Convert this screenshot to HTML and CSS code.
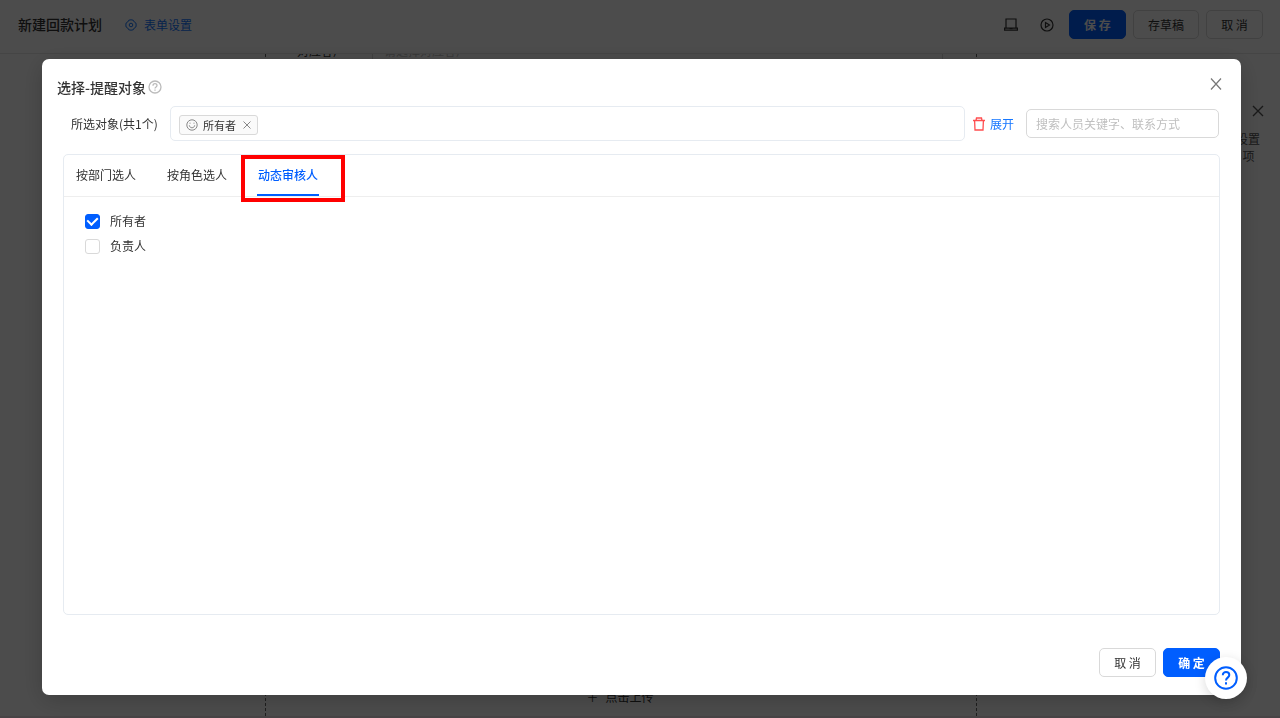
FILE: index.html
```html
<!DOCTYPE html>
<html lang="zh-CN">
<head>
    <meta charset="utf-8">
    <title>新建回款计划</title>
    <link rel="stylesheet" href="styles.css">
</head>
<body>
    <div class="page">
        <header class="header">
            <h1>新建回款计划</h1>
            <a class="form-setting" href="#">
                <svg width="12" height="12" viewBox="0 0 12 12" fill="none" stroke="currentColor"><path d="M3.8 1.2Q6 .4 8.2 1.2L9.3 3l1.6 1q.5 2 0 4L9.3 9l-1.1 1.8q-2.2.8-4.4 0L2.7 9 1.1 8q-.5-2 0-4l1.6-1z"/><circle cx="6" cy="6" r="1.8"/></svg>
                表单设置
            </a>
            <div class="header-actions">
                <div class="header-icons">
                    <button aria-label="预览">
                        <svg width="14" height="14" viewBox="0 0 14 14" fill="none" stroke="currentColor" stroke-width="1.2"><path d="M2 9.5V1h10v8.5M.6 10.2h12.8v2H.6z"/><path d="M5.5 10.6h3"/></svg>
                    </button>
                    <button aria-label="播放">
                        <svg width="14" height="14" viewBox="0 0 14 14" fill="none" stroke="currentColor" stroke-width="1.2"><circle cx="7" cy="7" r="6"/><path d="M5.5 4.5v5l4-2.5z"/></svg>
                    </button>
                </div>
                <button class="btn btn-primary">保 存</button>
                <button class="btn">存草稿</button>
                <button class="btn">取 消</button>
            </div>
        </header>
        <div class="main">
            <div class="canvas">
                <div class="form-row">
                    <label for="customer">对应客户</label>
                    <input type="text" id="customer" placeholder="请选择对应客户">
                </div>
                <button class="upload"><span>＋</span>点击上传</button>
            </div>
            <aside class="settings">
                <button aria-label="关闭设置">
                    <svg width="12" height="12" viewBox="0 0 12 12" fill="none" stroke="currentColor" stroke-width="1.4"><path d="M1 1l10 10M11 1L1 11"/></svg>
                </button>
                <p>设置<br>项&nbsp;&nbsp;</p>
            </aside>
        </div>
    </div>

    <div class="mask">
        <div class="modal" role="dialog" aria-labelledby="modal-title">
            <div class="modal-header">
                <h2 id="modal-title">选择-提醒对象</h2>
                <svg class="tip" width="14" height="14" viewBox="0 0 14 14" fill="none" stroke="currentColor" stroke-width="1.3"><circle cx="7" cy="7" r="6"/><path d="M5 5.7c0-2.7 4-2.6 4-.1C9 7 7 7 7 8.6M7 9.6v1.2"/></svg>
                <button class="modal-close" aria-label="关闭">
                    <svg width="12" height="12" viewBox="0 0 12 12" fill="none" stroke="currentColor" stroke-width="1.2"><path d="M1 .5l10 11M11 .5L1 11.5"/></svg>
                </button>
            </div>

            <div class="selected-row">
                <span class="selected-label">所选对象(共1个)</span>
                <div class="selected-box">
                    <span class="tag">
                        <svg width="12" height="12" viewBox="0 0 12 12" fill="none" stroke="currentColor"><circle cx="6" cy="6" r="5.2"/><path d="M3.3 6.3c.4 3.3 5 3.3 5.4 0M4 3.7v1M8 3.7v1"/></svg>
                        所有者
                        <button aria-label="移除">
                            <svg width="8" height="8" viewBox="0 0 8 8" fill="none" stroke="currentColor"><path d="M.5.5l7 7M7.5.5l-7 7"/></svg>
                        </button>
                    </span>
                </div>
                <button class="clear" aria-label="清空">
                    <svg width="12" height="14" viewBox="0 0 12 14" fill="none" stroke="currentColor" stroke-width="1.3"><path d="M0 3.5h12M3 3.5l.5-2.5h5L9 3.5M1.6 3.5L2 13h8l.4-9.5"/></svg>
                </button>
                <a class="expand" href="#">展开</a>
                <input class="search" type="text" aria-label="搜索" placeholder="搜索人员关键字、联系方式">
            </div>

            <div class="panel">
                <div class="tabs">
                    <button class="tab">按部门选人</button>
                    <button class="tab">按角色选人</button>
                    <button class="tab active">动态审核人<span class="mark"></span></button>
                </div>
                <div class="options">
                    <label><input type="checkbox" checked>所有者</label>
                    <label><input type="checkbox">负责人</label>
                </div>
            </div>

            <div class="modal-footer">
                <button class="btn">取 消</button>
                <button class="btn btn-primary">确 定</button>
            </div>
        </div>
    </div>

    <button class="help" aria-label="帮助">
        <svg width="24" height="24" viewBox="0 0 24 24" fill="none" stroke="currentColor" stroke-width="2"><circle cx="12" cy="12" r="10.8"/><path d="M8.8 9.2c0-4.3 6.5-4.1 6.5-.1 0 2.5-3.3 2.6-3.3 5.4M12 16.2v2.2"/></svg>
    </button>
</body>
</html>
```
FILE: styles.css
```css
* { box-sizing: border-box; }
body {
    margin: 0;
    font-family: "Noto Sans CJK SC", sans-serif;
    font-size: 12px;
    line-height: 18px;
    color: #333;
    overflow: hidden;
}
h1, h2, p { margin: 0; }
h1, h2 {
    font-size: 14px;
    font-weight: 500;
    line-height: 20px;
}
a { text-decoration: none; }
button, input {
    font-family: inherit;
    font-size: 12px;
    color: inherit;
}
button {
    padding: 0;
    border: none;
    background: none;
    cursor: pointer;
}
svg { display: block; }
input::placeholder { color: #bfbfbf; }

.btn {
    height: 29px;
    min-width: 57px;
    padding: 0 14px;
    border: 1px solid #d9d9d9;
    border-radius: 5px;
    background: #fff;
}
.btn-primary {
    background: #005eff;
    border-color: #005eff;
    color: #fff;
    font-weight: 700;
}

/* page behind the dialog */
.page {
    display: flex;
    flex-direction: column;
    height: 100vh;
    background: #fff;
    border-bottom: 2px solid #f0e4ea;
}
.header {
    position: relative;
    z-index: 1;
    display: flex;
    align-items: center;
    height: 54px;
    padding: 0 17px 4px 18px;
    background: #fff;
    border-bottom: 1px solid #e8e8e8;
}
.header h1 { padding-bottom: 2px; }
.form-setting {
    display: flex;
    align-items: center;
    gap: 7px;
    margin-left: 23px;
    color: #1677ff;
}
.header-actions {
    display: flex;
    align-items: center;
    gap: 7px;
    margin-left: auto;
}
.header-icons {
    display: flex;
    gap: 22px;
    margin-right: 8px;
}
.main {
    display: flex;
    flex: 1;
    min-height: 0;
}
.canvas {
    display: flex;
    flex: 1;
    flex-direction: column;
    justify-content: space-between;
    margin-left: 265px;
    padding: 0 33px 10px 31px;
    border: 1px dashed #666;
    border-width: 0 1px;
}
.form-row {
    display: flex;
    align-items: center;
    margin-top: -18px;
}
.form-row label { width: 75px; }
.form-row input {
    flex: 1;
    height: 29px;
    padding: 0 11px;
    border: 1px solid #d9d9d9;
}
.upload {
    align-self: center;
    line-height: 18px;
}
.upload span { margin-right: 7px; }
.settings {
    display: flex;
    flex-direction: column;
    align-items: flex-end;
    gap: 13px;
    width: 303px;
    padding: 51px 16px 0;
    color: #555;
    line-height: 17px;
    text-align: right;
}
.settings p { margin-right: 4px; }

.mask {
    position: fixed;
    inset: 0;
    z-index: 10;
    display: flex;
    padding: 59px 39px 23px 42px;
    background: rgba(0, 0, 0, 0.7);
}
.modal {
    display: flex;
    flex: 1;
    flex-direction: column;
    padding: 18px 21px;
    background: #fff;
    border-radius: 7px;
    box-shadow: 0 5px 24px rgba(0, 0, 0, 0.2);
}
.modal-header {
    display: flex;
    align-items: center;
    margin: 0 -3px 9px -6px;
}
.tip {
    margin-left: 2px;
    color: #bbb;
}
.modal-close {
    margin: 0 1px 6px auto;
    color: #777;
}

.selected-row {
    display: flex;
    align-items: center;
}
.selected-label {
    width: 99px;
    margin-left: 8px;
}
.selected-box {
    display: flex;
    flex: 1;
    align-items: center;
    height: 35px;
    padding: 3px 8px 0;
    border: 1px solid #e6ebf1;
    border-radius: 5px;
}
.tag {
    display: flex;
    align-items: center;
    gap: 5px;
    height: 20px;
    padding: 0 6px;
    border: 1px solid #d9d9d9;
    border-radius: 3px;
    background: #fafafa;
    font-size: 11px;
}
.tag svg { color: #888; }
.tag button { margin-left: 2px; }
.clear {
    margin: 0 5px 0 8px;
    color: #ff4d4f;
}
.expand {
    margin-right: 12px;
    color: #1677ff;
}
.search {
    width: 193px;
    height: 29px;
    margin-right: 1px;
    padding: 0 9px;
    border: 1px solid #d9d9d9;
    border-radius: 5px;
}

.panel {
    flex: 1;
    margin: 13px 0 33px;
    border: 1px solid #e6ebf1;
    border-radius: 5px;
}
.tabs {
    display: flex;
    gap: 29px;
    height: 42px;
    padding: 0 11px;
    border-bottom: 1px solid #eee;
}
.tab {
    position: relative;
    padding: 0 1px;
    border-bottom: 2px solid transparent;
}
.tab.active {
    border-color: #005eff;
    color: #005eff;
    font-weight: 500;
}
/* red frame round the current tab */
.mark {
    position: absolute;
    inset: 0 -26px -8px -16px;
    border: 4px solid #f00;
}
.options {
    display: flex;
    flex-direction: column;
    align-items: flex-start;
    gap: 7px;
    padding: 15px 21px;
}
.options label {
    display: flex;
    align-items: center;
    gap: 10px;
}
.options input {
    display: grid;
    place-items: center;
    width: 15px;
    height: 15px;
    margin: 0;
    appearance: none;
    border: 1px solid #d9d9d9;
    border-radius: 3px;
}
.options input:checked {
    background: #005eff;
    border-color: #005eff;
}
.options input:checked::after {
    content: "";
    width: 5px;
    height: 8px;
    margin-bottom: 2px;
    border: solid #fff;
    border-width: 0 2px 2px 0;
    transform: rotate(45deg);
}
.modal-footer {
    display: flex;
    justify-content: flex-end;
    gap: 7px;
}

.help {
    position: fixed;
    right: 33px;
    bottom: 19px;
    z-index: 20;
    display: grid;
    place-items: center;
    width: 42px;
    height: 42px;
    border-radius: 50%;
    background: #fff;
    color: #005eff;
    box-shadow: 0 3px 12px rgba(0, 0, 0, 0.15);
}
```
